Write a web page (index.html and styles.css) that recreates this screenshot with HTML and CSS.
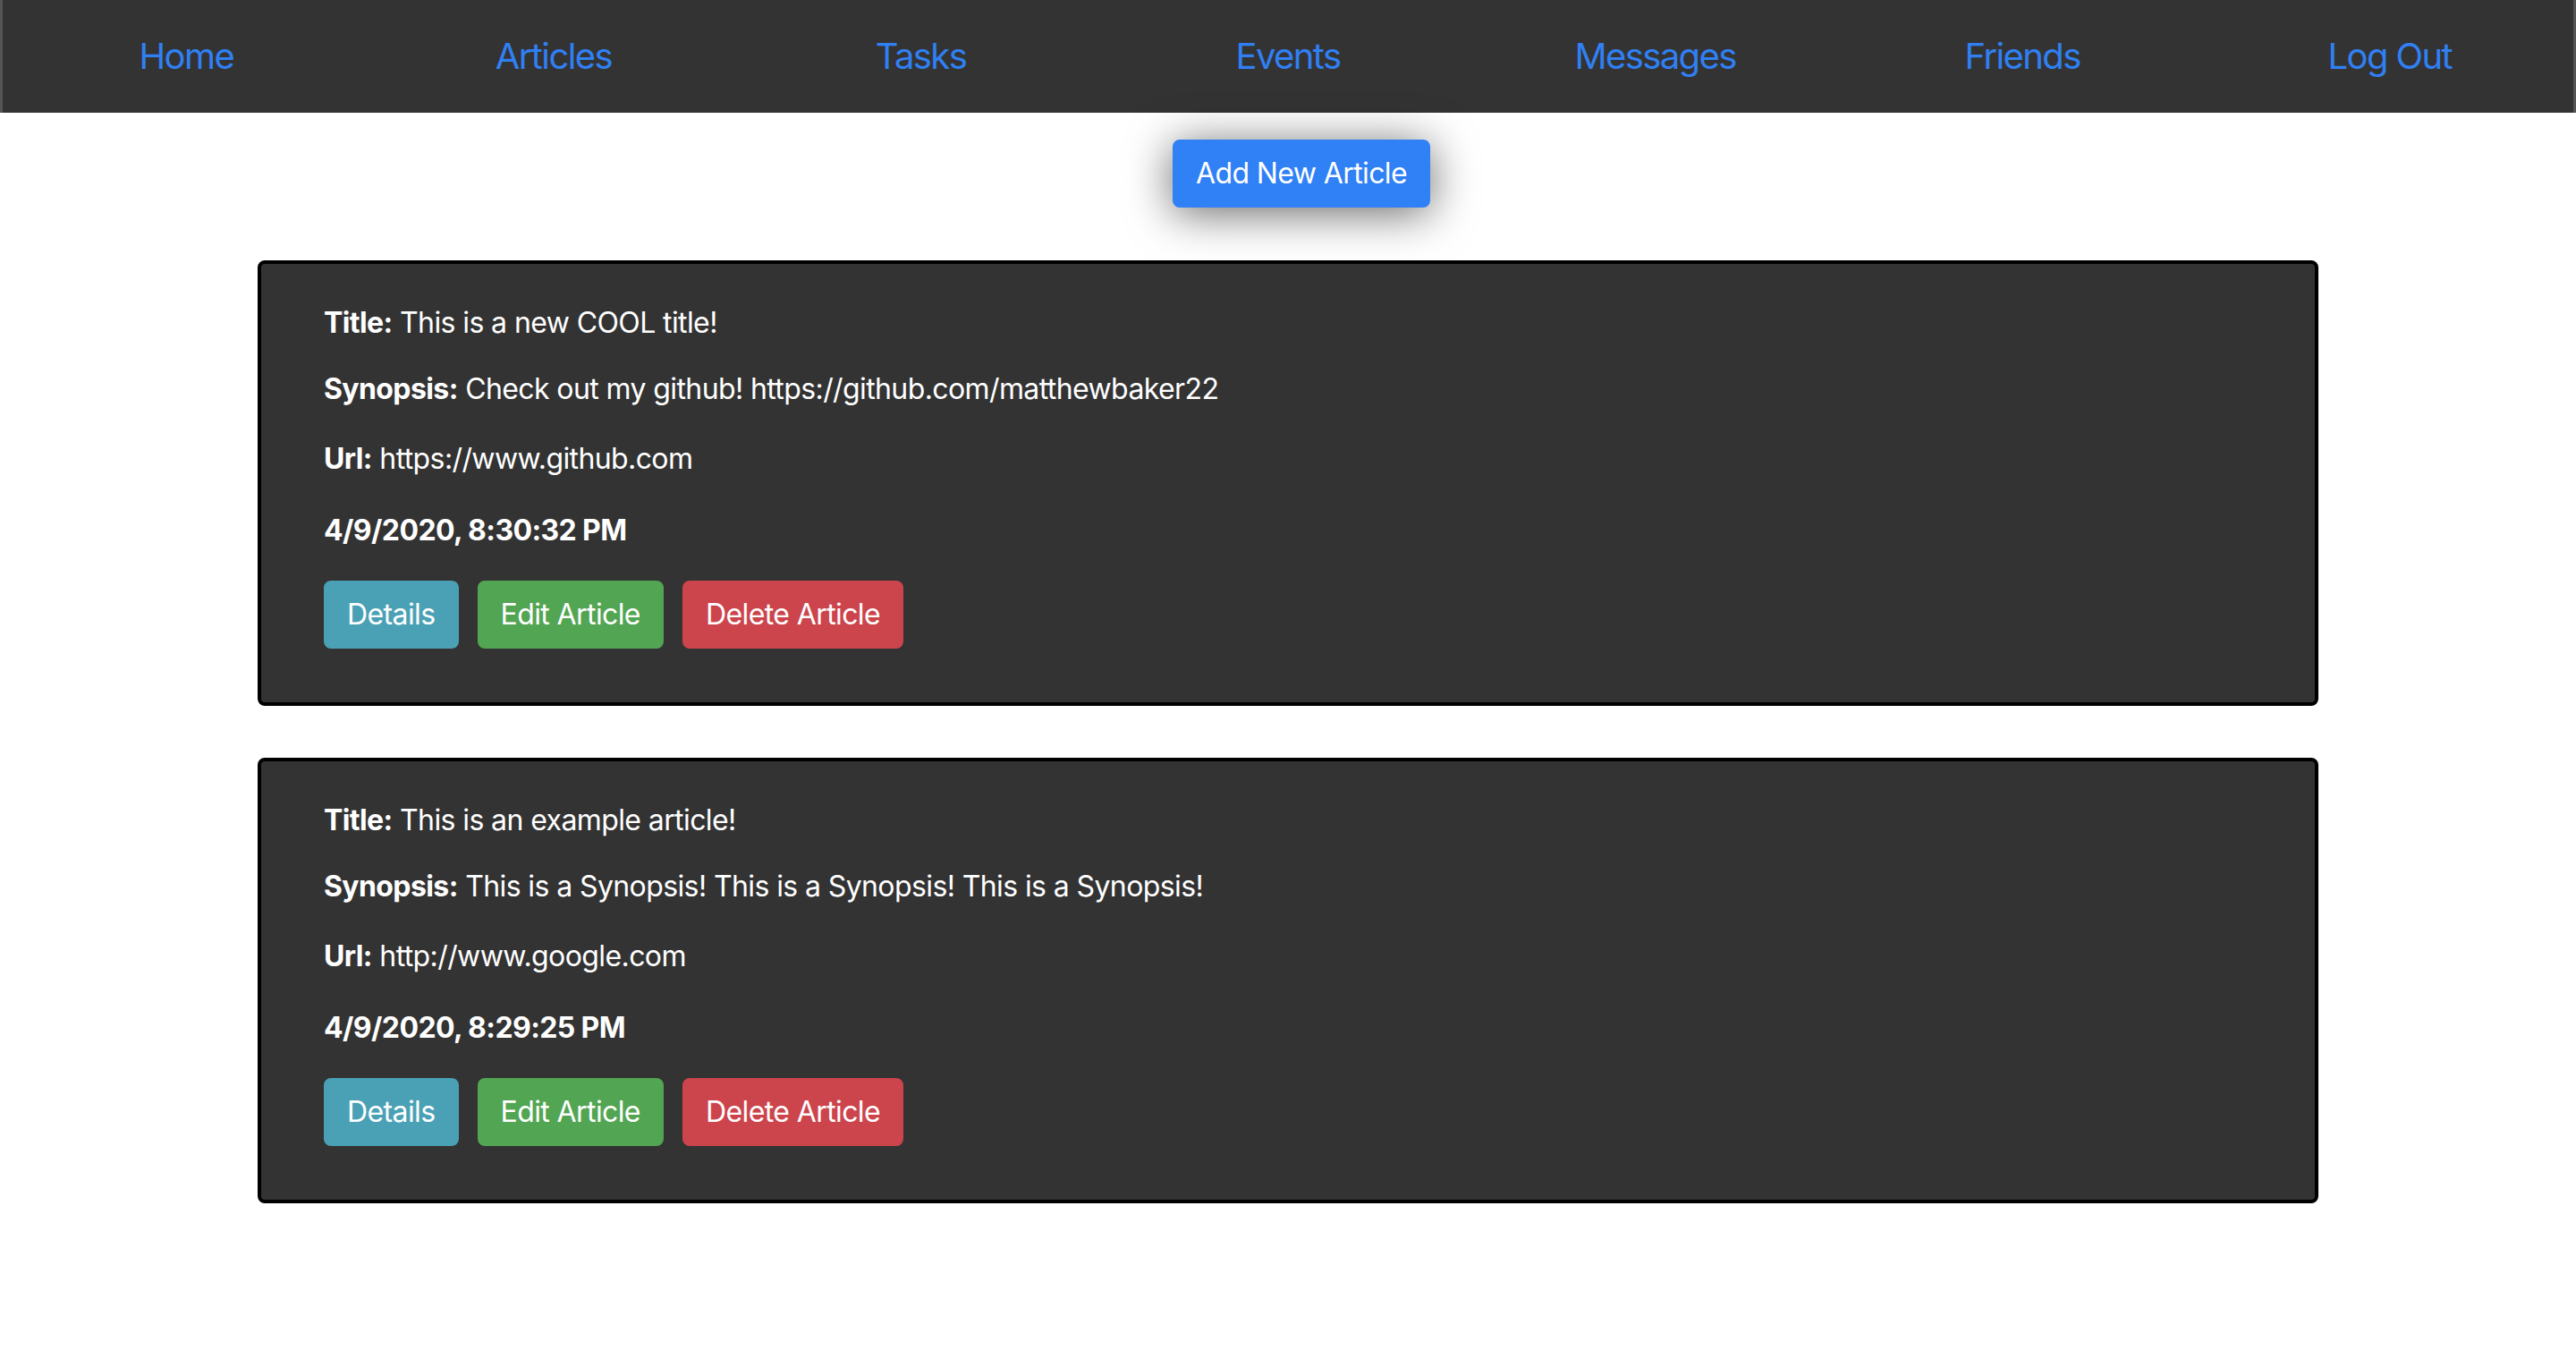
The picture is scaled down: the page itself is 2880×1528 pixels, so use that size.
FILE: index.html
```html
<!DOCTYPE html>
<html>
<head>
<meta charset="utf-8">
<link rel="stylesheet" href="styles.css">
</head>
<body>
<nav class="nav">
  <a class="nav-link" href="#">Home</a>
  <a class="nav-link" href="#">Articles</a>
  <a class="nav-link" href="#">Tasks</a>
  <a class="nav-link" href="#">Events</a>
  <a class="nav-link" href="#">Messages</a>
  <a class="nav-link" href="#">Friends</a>
  <a class="nav-link" href="#">Log Out</a>
</nav>
<main class="main">
  <div class="add-wrap"><button class="btn btn-primary add-btn">Add New Article</button></div>
  <div class="card">
    <p class="title"><b>Title:</b> This is a new COOL title!</p>
    <p class="synopsis"><b>Synopsis:</b> Check out my github! https://github.com/matthewbaker22</p>
    <p class="url"><b>Url:</b> https://www.github.com</p>
    <p class="date">4/9/2020, 8:30:32 PM</p>
    <div class="actions">
      <button class="btn btn-info">Details</button>
      <button class="btn btn-success">Edit Article</button>
      <button class="btn btn-danger">Delete Article</button>
    </div>
  </div>
  <div class="card">
    <p class="title"><b>Title:</b> This is an example article!</p>
    <p class="synopsis"><b>Synopsis:</b> This is a Synopsis! This is a Synopsis! This is a Synopsis!</p>
    <p class="url"><b>Url:</b> http://www.google.com</p>
    <p class="date">4/9/2020, 8:29:25 PM</p>
    <div class="actions">
      <button class="btn btn-info">Details</button>
      <button class="btn btn-success">Edit Article</button>
      <button class="btn btn-danger">Delete Article</button>
    </div>
  </div>
</main>
</body>
</html>
```
FILE: styles.css
```css
* { box-sizing: border-box; }
html, body { margin: 0; padding: 0; }
body {
  font-family: Inter, "Noto Sans", sans-serif;
  font-size: 32px;
  line-height: 48px;
  letter-spacing: -0.6px;
  color: #212529;
  background: #fff;
}
.nav {
  display: flex;
  height: 126px;
  background: #333333;
  border-left: 3px solid #555555;
  border-right: 3px solid #555555;
  align-items: center;
}
.nav-link {
  flex: 1 1 0;
  text-align: center;
  color: #3080f3;
  text-decoration: none;
  font-size: 40px;
  line-height: 60px;
  letter-spacing: -1.6px;
}
.main { display: flex; flex-direction: column; align-items: center; }
.add-wrap { padding-top: 30px; padding-bottom: 59px; padding-left: 30px; }
.btn {
  font-family: inherit;
  font-size: 32px;
  line-height: 48px;
  letter-spacing: -0.6px;
  padding: 12px 24px;
  border: 2px solid transparent;
  border-radius: 8px;
  color: #fff;
  cursor: pointer;
}
.btn-primary { background: #3080f6; border-color: #3080f6; }
.add-btn { box-shadow: 0 6px 50px rgba(0,0,0,0.6); }
.btn-info { background: #4aa1b5; border-color: #4aa1b5; }
.btn-success { background: #52a552; border-color: #52a552; }
.btn-danger { background: #cc444c; border-color: #cc444c; }
.card {
  width: 80%;
  background: #333333;
  border: 4px solid #000;
  border-radius: 8px;
  color: #fff;
  padding: 42px 70px 60px;
  margin-bottom: 58px;
}
.card p { margin: 0; }
.title { margin-bottom: 26px !important; }
.synopsis { margin-bottom: 30px !important; }
.url { margin-bottom: 32px !important; }
.date { font-weight: bold; margin-bottom: 32px !important; }
.actions { display: flex; gap: 21px; }
```
